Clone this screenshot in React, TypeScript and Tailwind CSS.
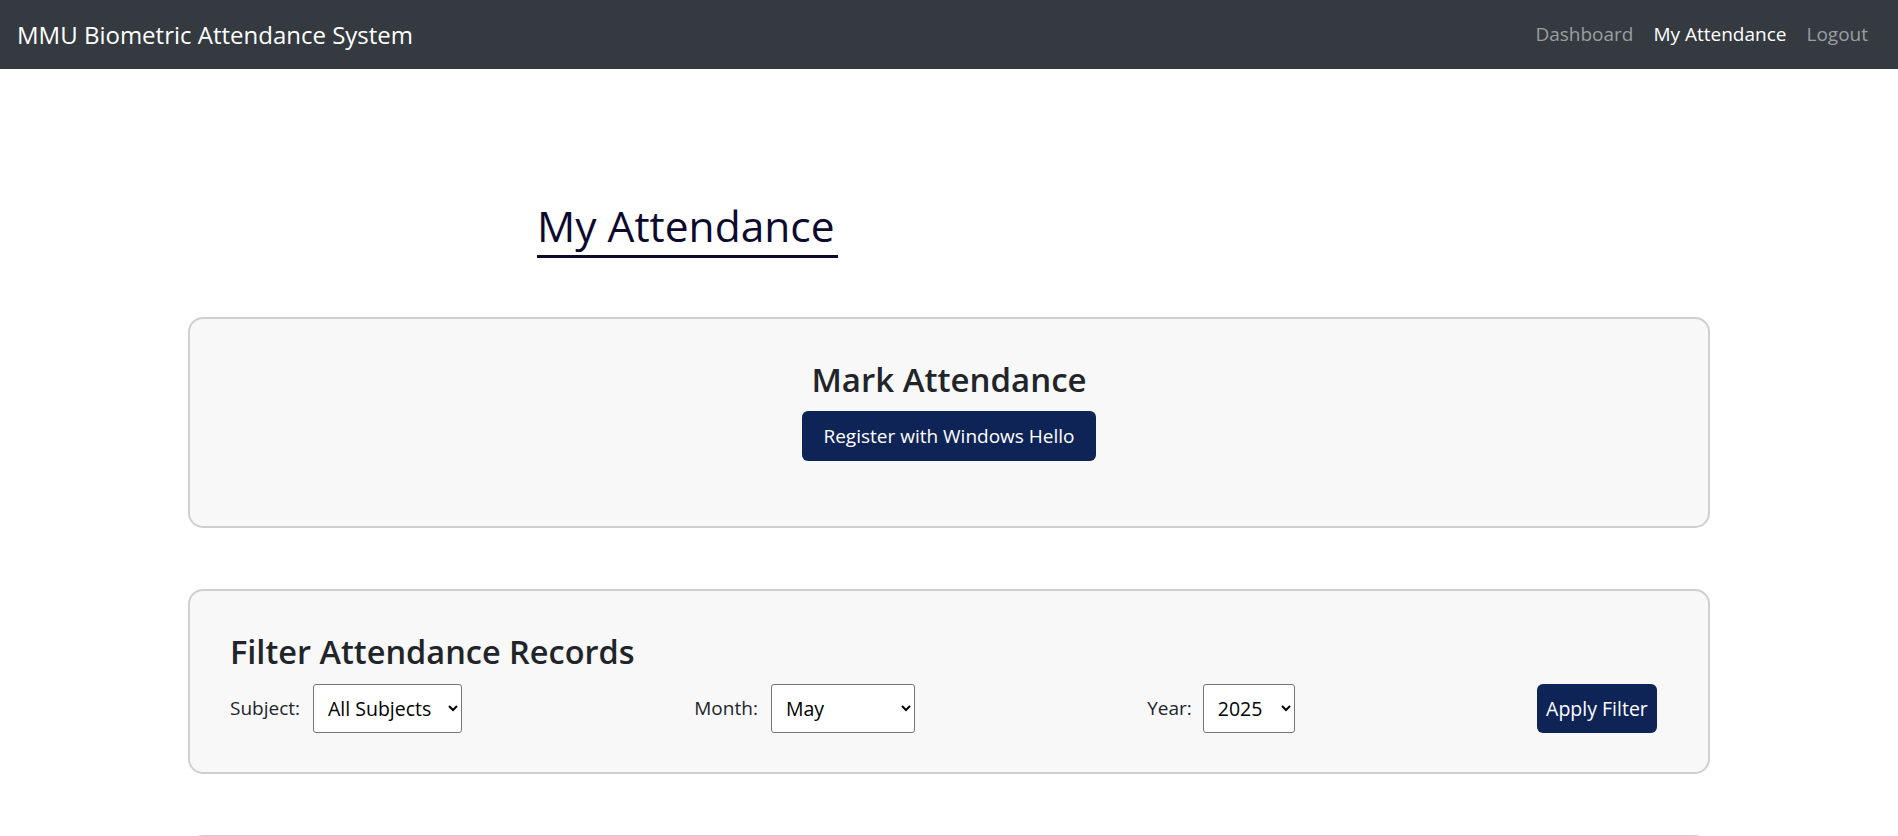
import React from "react";

const font = { fontFamily: '"Segoe UI", "Open Sans", "Noto Sans", sans-serif' };

export default function App() {
  return (
    <div className="min-h-screen bg-white text-[#212529]" style={font}>
      <nav className="flex h-[69px] items-center justify-between bg-[#343a40] pl-[17px] pr-[20px]">
        <span className="text-[24px] text-white">MMU Biometric Attendance System</span>
        <div className="flex items-center text-[19px]">
          <a className="px-[10px] text-[#9b9ea1]">Dashboard</a>
          <a className="px-[10px] text-white">My Attendance</a>
          <a className="px-[10px] text-[#9b9ea1]">Logout</a>
        </div>
      </nav>

      <main className="px-[188px]">
        <div className="ml-[349px] mt-[127px]">
          <h1 className="inline-block border-b-[3px] border-[#0d0a2e] pr-[3px] text-[42.5px] leading-[59px] text-[#0d0a2e]">
            My Attendance
          </h1>
        </div>

        <section className="mt-[59px] flex flex-col items-center rounded-[15px] border-2 border-[#cfcfcf] bg-[#f8f8f8] pb-[65px] pt-[40px]">
          <h2 className="text-[33px] font-semibold leading-[42px]">Mark Attendance</h2>
          <button className="mt-[10px] h-[50px] rounded-[6px] bg-[#0f2456] px-[21px] text-[19px] text-white">
            Register with Windows Hello
          </button>
        </section>

        <section className="mt-[61px] rounded-[15px] border-2 border-[#cfcfcf] bg-[#f8f8f8] pb-[39px] pl-[40px] pr-[51px] pt-[40px]">
          <h2 className="text-[32.5px] font-semibold leading-[42px]">Filter Attendance Records</h2>
          <div className="mt-[11px] flex items-center justify-between text-[19px]">
            <div className="flex items-center gap-[13px]">
              <label>Subject:</label>
              <select className="h-[49px] w-[149px] rounded-[3px] border border-[#767676] bg-white px-[10px] text-[19.5px] text-black">
                <option>All Subjects</option>
              </select>
            </div>
            <div className="flex items-center gap-[13px]">
              <label>Month:</label>
              <select className="h-[49px] w-[144px] rounded-[3px] border border-[#767676] bg-white px-[10px] text-[19.5px] text-black">
                <option>May</option>
              </select>
            </div>
            <div className="mr-[10px] flex items-center gap-[11px]">
              <label>Year:</label>
              <select className="h-[49px] w-[92px] rounded-[3px] border border-[#767676] bg-white px-[10px] text-[19.5px] text-black">
                <option>2025</option>
              </select>
            </div>
            <button className="h-[49px] w-[120px] rounded-[6px] bg-[#0f2456] text-[19.5px] text-white">
              Apply Filter
            </button>
          </div>
        </section>

        <section className="mt-[61px] h-[200px] rounded-[15px] border-2 border-[#cfcfcf] bg-[#f8f8f8]"></section>
      </main>
    </div>
  );
}
